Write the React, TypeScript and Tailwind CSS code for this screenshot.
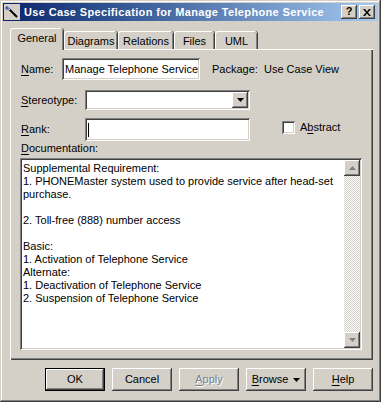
import React from "react";

const raised =
  "shadow-[inset_-1px_-1px_#404040,inset_1px_1px_#ffffff,inset_-2px_-2px_#808080,inset_2px_2px_#d4d0c8]";
const sunken =
  "shadow-[inset_1px_1px_#808080,inset_-1px_-1px_#ffffff,inset_2px_2px_#404040,inset_-2px_-2px_#d4d0c8]";

function U({ children }: { children: React.ReactNode }) {
  return <span className="underline underline-offset-[2px]">{children}</span>;
}

function Tab({ label, w, selected }: { label: string; w: number; selected?: boolean }) {
  if (selected) {
    return (
      <div
        className="relative z-10 mb-[-1px] flex h-[22px] items-start justify-center rounded-t-[3px] border-l border-t border-white bg-[#d4d0c8] pt-[3px] shadow-[inset_-1px_0_#808080,1px_0_#404040]"
        style={{ width: w }}
      >
        {label}
      </div>
    );
  }
  return (
    <div
      className="flex h-[18px] items-start justify-center rounded-t-[3px] border-l border-t border-white bg-[#d4d0c8] pt-[3px] shadow-[inset_-1px_0_#808080,1px_0_#404040]"
      style={{ width: w, marginLeft: 1 }}
    >
      {label}
    </div>
  );
}

function Btn({
  children,
  isDefault,
  disabled,
}: {
  children: React.ReactNode;
  isDefault?: boolean;
  disabled?: boolean;
}) {
  if (isDefault) {
    return (
      <div className="h-[23px] w-[60px] border border-black">
        <div className={`flex h-full w-full items-center justify-center ${raised}`}>{children}</div>
      </div>
    );
  }
  return (
    <div
      className={`flex h-[23px] w-[60px] items-center justify-center ${raised} ${
        disabled ? "text-[#808080] [text-shadow:1px_1px_#ffffff]" : ""
      }`}
    >
      {children}
    </div>
  );
}

export default function App() {
  const lines = [
    "Supplemental Requirement:",
    "1. PHONEMaster system used to provide service after head-set",
    "purchase.",
    "",
    "2. Toll-free (888) number access",
    "",
    "Basic:",
    "1. Activation of Telephone Service",
    "Alternate:",
    "1. Deactivation of Telephone Service",
    "2. Suspension of Telephone Service",
  ];
  return (
    <div className="h-[402px] w-[381px] bg-[#d4d0c8] p-[3px] font-['Liberation_Sans',Arial,sans-serif] text-[11px] leading-[13px] text-black shadow-[inset_-1px_-1px_#404040,inset_1px_1px_#d4d0c8,inset_-2px_-2px_#808080,inset_2px_2px_#ffffff]">
      {/* Title bar */}
      <div className="flex h-[18px] items-center bg-gradient-to-r from-[#0a246a] to-[#a6caf0] pl-[1px] pr-[3px]">
        <div className="flex h-[16px] w-[16px] items-center justify-center bg-[#d4d0c8]">
          <svg width="16" height="16" viewBox="0 0 16 16">
            <line x1="5" y1="5" x2="13" y2="13" stroke="#000" strokeWidth="2" />
            <line x1="3" y1="2" x2="3" y2="6" stroke="#1a3fbf" strokeWidth="1" />
            <line x1="1" y1="4" x2="5" y2="4" stroke="#1a3fbf" strokeWidth="1" />
            <rect x="5" y="5" width="1" height="1" fill="#ffffff" />
          </svg>
        </div>
        <div className="ml-[4px] flex-1 whitespace-nowrap text-[11px] font-bold tracking-[0.35px] text-white">
          Use Case Specification for Manage Telephone Service
        </div>
        <div className={`flex h-[14px] w-[16px] items-center justify-center bg-[#d4d0c8] text-[11px] font-bold ${raised}`}>
          <span className="mt-[-1px]">?</span>
        </div>
        <div className={`ml-[2px] flex h-[14px] w-[16px] items-center justify-center bg-[#d4d0c8] ${raised}`}>
          <svg width="8" height="7" viewBox="0 0 8 7">
            <path d="M0 0h2l2 2.5 2-2.5h2l-3 3.5 3 3.5h-2l-2-2.5-2 2.5h-2l3-3.5z" fill="#000" />
          </svg>
        </div>
      </div>

      {/* Tabs */}
      <div className="ml-[7px] mt-[8px] flex h-[20px] items-end">
        <Tab label="General" w={53} selected />
        <Tab label="Diagrams" w={53} />
        <Tab label="Relations" w={55} />
        <Tab label="Files" w={40} />
        <Tab label="UML" w={42} />
      </div>

      {/* Panel */}
      <div className="ml-[7px] flex h-[311px] w-[363px] flex-col shadow-[inset_1px_1px_#ffffff,inset_-1px_-1px_#404040,inset_-2px_-2px_#808080]">
        {/* Name row */}
        <div className="ml-[11px] mt-[9px] flex h-[22px] items-center">
          <div className="w-[41px]">
            <U>N</U>ame:
          </div>
          <div className={`flex h-[22px] w-[138px] items-center bg-white pl-[3px] whitespace-nowrap ${sunken}`}>
            Manage Telephone Service
          </div>
          <div className="ml-[12px] whitespace-pre">Package:  Use Case View</div>
        </div>
        {/* Stereotype row */}
        <div className="ml-[11px] mt-[10px] flex h-[20px] items-center">
          <div className="w-[64px]">
            <U>S</U>tereotype:
          </div>
          <div className={`flex h-[20px] w-[165px] items-center justify-end bg-white pr-[2px] ${sunken}`}>
            <div className={`flex h-[16px] w-[16px] items-center justify-center bg-[#d4d0c8] ${raised}`}>
              <svg width="7" height="4" viewBox="0 0 7 4">
                <path d="M0 0h7l-3.5 4z" fill="#000" />
              </svg>
            </div>
          </div>
        </div>
        {/* Rank row */}
        <div className="ml-[11px] mt-[8px] flex h-[23px] items-center">
          <div className="w-[64px]">
            <U>R</U>ank:
          </div>
          <div className={`flex h-[23px] w-[165px] items-center bg-white pl-[3px] ${sunken}`}>
            <div className="h-[14px] w-[1px] bg-black" />
          </div>
          <div className={`ml-[32px] mt-[-5px] h-[13px] w-[13px] bg-white ${sunken}`} />
          <div className="ml-[5px] mt-[-4px]">
            A<U>b</U>stract
          </div>
        </div>
        {/* Documentation label */}
        <div className="ml-[11px] mt-[1px] h-[13px]">
          <U>D</U>ocumentation:
        </div>
        {/* Textarea */}
        <div className={`ml-[10px] mt-[3px] flex h-[192px] w-[342px] bg-white p-[2px] ${sunken}`}>
          <div className="flex-1 overflow-hidden pl-[1px] pt-[2px]">
            {lines.map((l, i) => (
              <div key={i} className="h-[13px] whitespace-nowrap">
                {l}
              </div>
            ))}
          </div>
          <div className="flex w-[16px] flex-col bg-[repeating-conic-gradient(#ffffff_0_25%,#d4d0c8_0_50%)] bg-[length:2px_2px]">
            <div className={`flex h-[16px] w-[16px] items-center justify-center bg-[#d4d0c8] ${raised}`}>
              <svg width="7" height="4" viewBox="0 0 7 4">
                <path d="M3.5 0l3.5 4h-7z" fill="#808080" />
              </svg>
            </div>
            <div className="flex-1" />
            <div className={`flex h-[16px] w-[16px] items-center justify-center bg-[#d4d0c8] ${raised}`}>
              <svg width="7" height="4" viewBox="0 0 7 4">
                <path d="M0 0h7l-3.5 4z" fill="#808080" />
              </svg>
            </div>
          </div>
        </div>
      </div>

      {/* Buttons */}
      <div className="ml-[42px] mt-[8px] flex gap-[7px]">
        <Btn isDefault>OK</Btn>
        <Btn>Cancel</Btn>
        <Btn disabled>
          <span className="underline underline-offset-[2px]">A</span>pply
        </Btn>
        <Btn>
          <span>
            <U>B</U>rowse
          </span>
          <svg className="ml-[5px]" width="7" height="4" viewBox="0 0 7 4">
            <path d="M0 0h7l-3.5 4z" fill="#000" />
          </svg>
        </Btn>
        <Btn>
          <span>
            <U>H</U>elp
          </span>
        </Btn>
      </div>
    </div>
  );
}
